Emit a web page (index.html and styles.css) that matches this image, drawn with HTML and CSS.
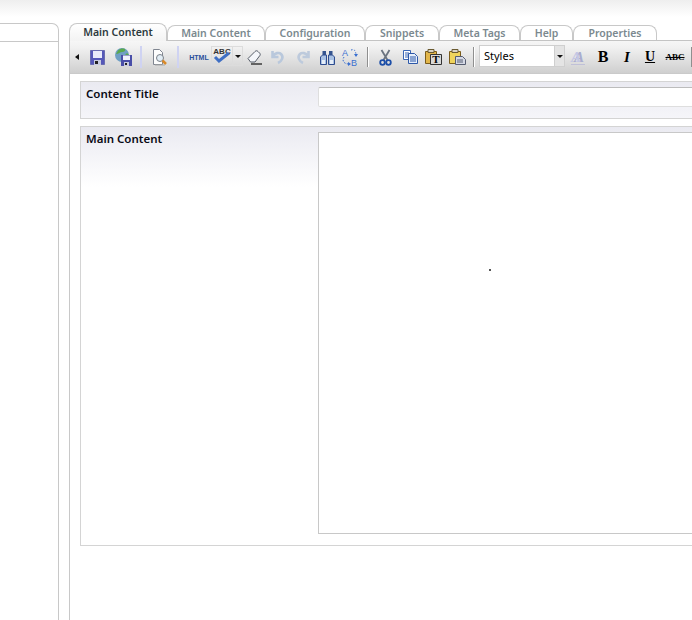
FILE: index.html
```html
<!DOCTYPE html>
<html lang="en">
<head>
    <meta charset="UTF-8">
    <meta name="viewport" content="width=device-width, initial-scale=1.0">
    <title>Edit Resource</title>
    <link rel="stylesheet" href="styles.css">
</head>
<body>
    <div class="layout">
        <div class="tree-pane">
            <div class="tree-head"></div>
        </div>

        <div class="main-pane">
            <ul class="tabs">
                <li class="tab active">Main Content</li>
                <li class="tab w-main">Main Content</li>
                <li class="tab w-config">Configuration</li>
                <li class="tab w-snippets">Snippets</li>
                <li class="tab w-meta">Meta Tags</li>
                <li class="tab w-help">Help</li>
                <li class="tab w-props">Properties</li>
            </ul>

            <div class="tab-body">
                <div class="toolbar">
                    <span class="tb-item"><svg width="4" height="6" viewBox="0 0 4 6"><path d="M4 0v6L0 3z" fill="#111"/></svg></span>

                    <!-- save -->
                    <span class="tb-item"><svg width="15" height="15" viewBox="0 0 15 15"><path d="M.5.5h14v14H.5z" fill="#5558b8" stroke="#6a6db0"/><path d="M3 1h9v7H3z" fill="#e9ebfa"/><path d="M4 10h7v5H4z" fill="#c8cbe0"/><path d="M5 11h3v3H5z" fill="#222"/></svg></span>

                    <!-- save as html -->
                    <span class="tb-item"><svg width="17" height="18" viewBox="0 0 17 18"><circle cx="7" cy="7" r="7" fill="#6f9fc4"/><path d="M3 2.500c2-2 5-2.500 7-1.500 1 2-1 3-3 3S4 6 1 6zM9 8l3-3 2 2-2 3z" fill="#5aa84f"/><path d="M6 7h11v11H6z" fill="#4a4fa8"/><path d="M8 7.500h7v4.500H8z" fill="#eef0fb"/><path d="M9 14h5v4H9z" fill="#c8cbe0"/><path d="M10 15h2v2h-2z" fill="#222"/></svg></span>
                    <span class="tb-item"><i class="sep blue"></i></span>

                    <!-- preview -->
                    <span class="tb-item"><svg width="16" height="17" viewBox="0 0 16 17"><path d="M1.500 .5h6l3 3v12h-9z" fill="#fdfdfd" stroke="#7f8590"/><circle cx="8" cy="9" r="3.500" fill="#e2edf5" stroke="#7a8088"/><path d="M10.500 11.500l3.500 3.500" stroke="#d98a2a" stroke-width="2.500"/><path d="M3 16h10" stroke="#aaa"/></svg></span>
                    <span class="tb-item"><i class="sep blue"></i></span>

                    <span class="tb-item tb-html">HTML</span>

                    <span class="tb-combo">
                        <span class="combo-main"><svg width="20" height="18" viewBox="0 0 20 18"><text x="10" y="7" text-anchor="middle" class="svg-abc">ABC</text><path d="M3 10l4 4 10-8" fill="none" stroke="#3f6fc4" stroke-width="3"/></svg></span>
                        <span class="combo-arrow"><i class="caret"></i></span>
                    </span>

                    <!-- remove format -->
                    <span class="tb-item"><svg width="16" height="16" viewBox="0 0 16 16"><path d="M1 9.500L8 2.500c1-1 2-1 3 0l1.500 1.500c1 1 1 2 0 3L8 13H3.500z" fill="#f4f6fa" stroke="#555c68"/><path d="M4 15h11" stroke="#111" stroke-width="1.200"/></svg></span>

                    <!-- undo, redo (disabled) -->
                    <span class="tb-item"><svg width="14" height="15" viewBox="0 0 14 15"><path d="M1.500 1v6h6M2 6c2-3 6-4 8-2 3 3 1 7-3 9" fill="none" stroke="#b9c8dc" stroke-width="2.600"/></svg></span>
                    <span class="tb-item"><svg width="14" height="15" viewBox="0 0 14 15"><path d="M12.500 1v6h-6M12 6c-2-3-6-4-8-2-3 3-1 7 3 9" fill="none" stroke="#bdcadc" stroke-width="2.600"/></svg></span>

                    <!-- find -->
                    <span class="tb-item"><svg width="15" height="15" viewBox="0 0 15 15"><path d="M2.500 1h3.500v4H2.500zM9 1h3.500v4H9z" fill="#35558f"/><path d="M.5 14.500V7l2-2h4v9.500zM14.500 14.500V7l-2-2h-4v9.500z" fill="#a9c2e4" stroke="#2f4d8f"/><path d="M2 10h3v4H2zM10 10h3v4h-3z" fill="#e6eef8"/></svg></span>

                    <!-- replace -->
                    <span class="tb-item"><svg width="18" height="19" viewBox="0 0 18 19"><text x="1" y="8" class="svg-ab">A</text><text x="10" y="18" class="svg-ab">B</text><path d="M3 9c-2 3-1 7 5 7M10 2c3-1 5 0 5 6" fill="none" stroke="#3a6fd0" stroke-dasharray="1.500 1.500"/><path d="M7 14l3 2-3 2zM13 6l2 3 2-3z" fill="#3a6fd0"/></svg></span>
                    <span class="tb-item"><i class="sep"></i></span>

                    <!-- cut -->
                    <span class="tb-item"><svg width="13" height="17" viewBox="0 0 13 17"><path d="M2.500 1l6 10M10.500 1l-6 10" stroke="#6b7480" stroke-width="1.800"/><circle cx="3.500" cy="13.500" r="2.300" fill="none" stroke="#1d4fa8" stroke-width="1.800"/><circle cx="9.500" cy="13.500" r="2.300" fill="none" stroke="#1d4fa8" stroke-width="1.800"/></svg></span>

                    <!-- copy -->
                    <span class="tb-item"><svg width="15" height="14" viewBox="0 0 15 14"><path d="M.5.5h7v9h-7z" fill="#fff" stroke="#3a66b5"/><path d="M2 3h4M2 5h4M2 7h4" stroke="#3a66b5"/><path d="M5.500 3.500h6l3 3v7h-9z" fill="#e6effc" stroke="#2d58a8"/><path d="M7 7h6M7 9h6M7 11h6" stroke="#2d58a8"/></svg></span>

                    <!-- paste as text -->
                    <span class="tb-item"><svg width="17" height="16" viewBox="0 0 17 16"><path d="M.5 2.500h11v12H.5z" fill="#e2b64a" stroke="#7a5c1c"/><path d="M3 .5h6v3H3z" fill="#d8d3c4" stroke="#6a5a30"/><path d="M5.500 5.500h11v10h-11z" fill="#d8d8d8" stroke="#333"/><text x="11" y="14" text-anchor="middle" class="svg-t">T</text></svg></span>

                    <!-- paste from word -->
                    <span class="tb-item"><svg width="17" height="16" viewBox="0 0 17 16"><path d="M.5 2.500h11v12H.5z" fill="#efd45c" stroke="#7a5c1c"/><path d="M3 .5h6v3H3z" fill="#d8d3c4" stroke="#6a5a30"/><path d="M6.500 7.500h7l3 3v5h-10z" fill="#d4d8e4" stroke="#555c70"/><path d="M8 11h6M8 13h6" stroke="#555c70"/></svg></span>
                    <span class="tb-item"><i class="sep"></i></span>

                    <span class="tb-item">
                        <span class="style-select">
                            <span class="style-value">Styles</span>
                            <span class="style-arrow"><i class="caret"></i></span>
                        </span>
                    </span>

                    <span class="tb-item tb-color">A</span>
                    <span class="tb-item tb-bold">B</span>
                    <span class="tb-item tb-italic">I</span>
                    <span class="tb-item tb-under">U</span>
                    <span class="tb-item tb-strike">ABC</span>
                    <span class="tb-item"><i class="sep"></i></span>
                </div>

                <div class="fields">
                    <div class="field field-title">
                        <label class="field-label">Content Title</label>
                        <div class="title-input"></div>
                    </div>
                    <div class="field field-content">
                        <label class="field-label">Main Content</label>
                        <div class="content-area"><span class="caret-dot"></span></div>
                    </div>
                </div>
            </div>
        </div>
    </div>
</body>
</html>
```

FILE: styles.css
```css
* {
    margin: 0;
    padding: 0;
    box-sizing: border-box;
}

html, body {
    height: 620px;
    overflow: hidden;
}

body {
    background: linear-gradient(#eeeeee 0, #ffffff 17px);
    background-repeat: no-repeat;
    font-family: "Noto Sans", Tahoma, sans-serif;
    font-size: 11px;
    color: #000;
}

.layout {
    display: flex;
    gap: 10px;
    padding-top: 23px;
    height: 620px;
    width: 900px;
}

/* left tree */
.tree-pane {
    width: 59px;
    flex: none;
    border: 1px solid #c8c8c8;
    border-left: none;
    border-bottom: none;
    border-top-right-radius: 7px;
    background: #fff;
}

.tree-head {
    height: 18px;
    border-bottom: 1px solid #c8c8c8;
}

/* tabs */
.main-pane {
    width: 800px;
    flex: none;
    display: flex;
    flex-direction: column;
}

.tabs {
    list-style: none;
    display: flex;
    align-items: flex-end;
    height: 18px;
    position: relative;
    z-index: 1;
    margin-bottom: -1px;
}

.tab {
    height: 15px;
    margin-bottom: 1px;
    border: 1px solid #c8c8c8;
    border-bottom: none;
    border-radius: 8px 8px 0 0;
    background: #fff;
    color: #7b898f;
    font-size: 10.5px;
    font-weight: 600;
    line-height: 14px;
    text-align: center;
    flex: none;
}

.tab.active {
    width: 98px;
    height: 18px;
    margin-bottom: 0;
    background: linear-gradient(#ffffff, #f3f3f3);
    color: #2d3a40;
    line-height: 17px;
}

.w-main { width: 98px; }
.w-config { width: 100px; }
.w-snippets { width: 74px; }
.w-meta { width: 81px; }
.w-help { width: 53px; }
.w-props { width: 84px; }

.tab-body {
    flex: 1;
    border-left: 1px solid #c8c8c8;
    background: #fff;
}

/* editor toolbar */
.toolbar {
    display: grid;
    grid-template-columns: 6px 35px 16px 20px 18px 18px 24px 32px 24px 22px 28px 20px 26px 8px 28px 22px 24px 24px 8px 90px 22px 28px 20px 26px 24px 8px;
    align-items: center;
    justify-items: center;
    height: 34px;
    padding-left: 4px;
    border-top: 1px solid #c4c4c4;
    border-bottom: 1px solid #cacaca;
    background: linear-gradient(#f6f6f6, #f1f1f1 20%, #cfcfcf);
}

.tb-item {
    display: flex;
    align-items: center;
    justify-content: center;
}

.sep {
    display: block;
    width: 1px;
    height: 20px;
    background: #8f8f8f;
    box-shadow: 1px 0 0 #fff;
}

.sep.blue {
    width: 2px;
    height: 22px;
    background: #cfd3f2;
    box-shadow: none;
}

.tb-html {
    color: #2a4f9c;
    font: 700 7px "Liberation Sans", sans-serif;
}

.tb-combo {
    display: flex;
    width: 32px;
    height: 20px;
    margin-bottom: 2px;
    border: 1px solid #dcdcdc;
}

.combo-main {
    width: 21px;
    display: flex;
    align-items: center;
    justify-content: center;
    border-right: 1px solid #dcdcdc;
}

.combo-arrow {
    flex: 1;
    display: flex;
    align-items: center;
    justify-content: center;
}

.caret {
    display: block;
    width: 0;
    height: 0;
    border-left: 3px solid transparent;
    border-right: 3px solid transparent;
    border-top: 3px solid #111;
}

.svg-abc {
    font: 700 8px "Liberation Sans", sans-serif;
    fill: #333;
}

.svg-ab {
    font: 9px "Liberation Sans", sans-serif;
    fill: #3a6fd0;
}

.svg-t {
    font: 700 11px "Liberation Serif", serif;
    fill: #000;
}

.style-select {
    display: flex;
    width: 86px;
    height: 22px;
    margin-bottom: 2px;
    border: 1px solid #cfcfcf;
    background: #fff;
}

.style-value {
    flex: 1;
    padding-left: 4px;
    line-height: 19px;
    font-size: 11px;
    font-weight: 400;
}

.style-arrow {
    width: 10px;
    display: flex;
    align-items: center;
    justify-content: center;
    border-left: 1px solid #cfcfcf;
    background: #e4e4e4;
}

.tb-color {
    font: italic 700 15px "Liberation Serif", serif;
    color: #c3c6e4;
    text-shadow: 3px 0 0 #a9accf;
    border-bottom: 1px solid #c0c0d8;
    line-height: 14px;
    padding-right: 4px;
}

.tb-bold {
    font: 700 16px "Liberation Serif", serif;
}

.tb-italic {
    font: italic 700 15px "Liberation Serif", serif;
}

.tb-under {
    font: 700 14px "Liberation Serif", serif;
    text-decoration: underline;
}

.tb-strike {
    font: 700 9px "Liberation Serif", serif;
    text-decoration: line-through;
}

/* fields */
.fields {
    display: flex;
    flex-direction: column;
    gap: 7px;
    padding: 7px 0 0 10px;
}

.field {
    display: flex;
    border: 1px solid #d4d4d4;
    padding: 5px 0 0 5px;
}

.field-title {
    height: 38px;
    background: linear-gradient(#eaeaf1, #f5f5f9);
}

.field-content {
    height: 420px;
    background: linear-gradient(#eaeaf1, #ffffff 60px);
}

.field-label {
    width: 232px;
    flex: none;
    font-size: 11.5px;
    font-weight: 600;
    color: #0a0a14;
    line-height: 13px;
}

.title-input {
    flex: 1;
    height: 20px;
    border: 1px solid #dedede;
    border-top-color: #bcbcbc;
    border-radius: 2px;
    background: #fff;
}

.content-area {
    flex: 1;
    height: 402px;
    position: relative;
    border: 1px solid #c8c8c8;
    background: #fff;
}

.caret-dot {
    position: absolute;
    left: 170px;
    top: 136px;
    width: 2px;
    height: 2px;
    background: #555;
}
```
